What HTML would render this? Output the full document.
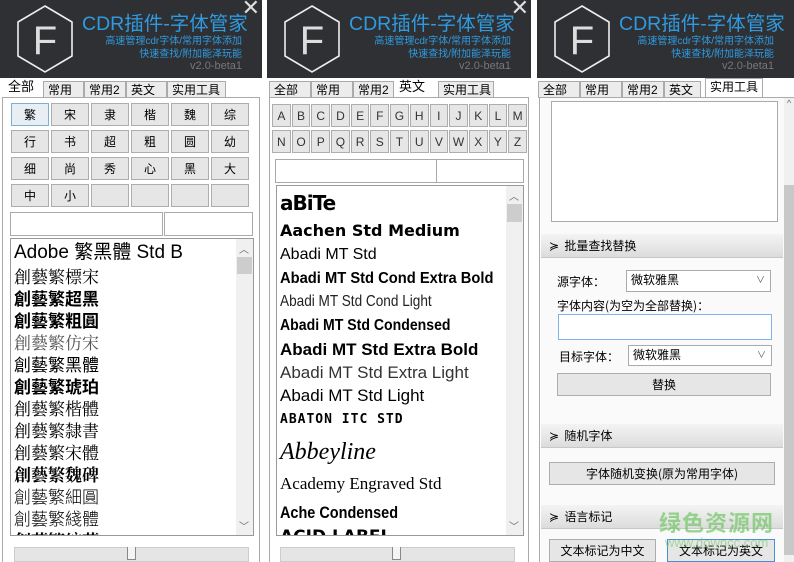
<!DOCTYPE html>
<html><head><meta charset="utf-8">
<style>
*{margin:0;padding:0;box-sizing:border-box}
body{width:794px;height:562px;background:#fff;position:relative;overflow:hidden;font-family:"Liberation Sans","Microsoft YaHei","Noto Sans CJK SC",sans-serif;font-size:12px;color:#000}
.p{position:absolute;top:0;height:562px;overflow:hidden;background:#fff}
.a{position:absolute}
.hdr{position:absolute;left:0;top:0;height:78px;background:#2f3033;width:100%}
.title{position:absolute;left:82px;top:7px;color:#2f9ae0;font-size:19.5px;font-family:"Liberation Sans","Noto Sans CJK SC",sans-serif;white-space:nowrap}
.sub{position:absolute;right:20px;color:#2f9ae0;font-size:10px;text-align:right;white-space:nowrap;line-height:13px}
.ver{position:absolute;right:20px;top:60px;color:#777;font-size:11px}
.x{position:absolute;right:2px;top:-4px;color:#ddd;font-size:22px;font-family:"DejaVu Sans",sans-serif}
.tab{position:absolute;top:81px;height:17px;border:1px solid #aaa;border-bottom:none;background:#ececec;font-size:12px;line-height:16px;padding-left:4px;font-family:"Liberation Sans","Noto Sans CJK SC",sans-serif}
.tab.on{background:#fff;border-color:#fff;top:78px;height:20px;font-size:13px}
.box{position:absolute;border:1px solid #aaa;background:#fff}
.btn{position:absolute;border:1px solid #adadad;background:#e6e6e6;text-align:center;font-family:"Noto Sans CJK SC",sans-serif;font-size:12px}
.lst{position:absolute;border:1px solid #999;background:#fff;overflow:hidden}
.it{position:absolute;left:3px;white-space:nowrap;font-family:"Noto Serif CJK SC","Noto Sans CJK SC",serif}
.sb{position:absolute;top:0;right:0;width:17px;bottom:0;background:#f0f0f0}
.sec{position:absolute;left:4px;width:242px;height:24px;background:linear-gradient(#f4f4f4,#dcdcdc);border-bottom:1px solid #c8c8c8;font-size:12px;line-height:24px;padding-left:8px;font-family:"Noto Sans CJK SC",sans-serif}
.sel{position:absolute;border:1px solid #aaa;background:#fff;font-size:12px;line-height:18px;padding-left:4px;font-family:"Noto Sans CJK SC",sans-serif}
.lb{position:absolute;font-size:12px;font-family:"Noto Sans CJK SC",sans-serif;white-space:nowrap}
.arr{position:absolute;right:5px;top:0;font-size:9px;color:#555}
</style></head><body>

<!-- PANEL 1 -->
<div class="p" style="left:0;width:262px">
 <div class="hdr">
  <svg class="a" style="left:15px;top:4px" width="60" height="70" viewBox="0 0 60 70"><polygon points="30,2 57,18 57,52 30,68 3,52 3,18" fill="none" stroke="#eee" stroke-width="1.6"/><text x="30" y="50" font-size="40" fill="#ddd" text-anchor="middle" font-family="Liberation Sans">F</text></svg>
  <div class="title">CDR插件-字体管家</div>
  <div class="sub" style="top:35px">高速管理cdr字体/常用字体添加<br>快速查找/附加能泽玩能</div>
  <div class="ver">v2.0-beta1</div>
  <div class="x">✕</div>
 </div>
 <div class="tab on" style="left:3px;width:40px">全部</div>
 <div class="tab" style="left:43px;width:41px">常用</div>
 <div class="tab" style="left:84px;width:42px">常用2</div>
 <div class="tab" style="left:126px;width:41px">英文</div>
 <div class="tab" style="left:167px;width:59px">实用工具</div>
 <div class="a" style="left:2px;top:97px;width:258px;height:470px;border:1px solid #aaa;border-bottom:none"></div>
 <div class="btn" style="left:11px;top:103px;width:38px;height:23px;line-height:21px;border-color:#7ab0d8;background:#e8eef4">繁</div>
 <div class="btn" style="left:51px;top:103px;width:38px;height:23px;line-height:21px">宋</div>
 <div class="btn" style="left:91px;top:103px;width:38px;height:23px;line-height:21px">隶</div>
 <div class="btn" style="left:131px;top:103px;width:38px;height:23px;line-height:21px">楷</div>
 <div class="btn" style="left:171px;top:103px;width:38px;height:23px;line-height:21px">魏</div>
 <div class="btn" style="left:211px;top:103px;width:38px;height:23px;line-height:21px">综</div>
 <div class="btn" style="left:11px;top:130px;width:38px;height:23px;line-height:21px">行</div>
 <div class="btn" style="left:51px;top:130px;width:38px;height:23px;line-height:21px">书</div>
 <div class="btn" style="left:91px;top:130px;width:38px;height:23px;line-height:21px">超</div>
 <div class="btn" style="left:131px;top:130px;width:38px;height:23px;line-height:21px">粗</div>
 <div class="btn" style="left:171px;top:130px;width:38px;height:23px;line-height:21px">圆</div>
 <div class="btn" style="left:211px;top:130px;width:38px;height:23px;line-height:21px">幼</div>
 <div class="btn" style="left:11px;top:157px;width:38px;height:23px;line-height:21px">细</div>
 <div class="btn" style="left:51px;top:157px;width:38px;height:23px;line-height:21px">尚</div>
 <div class="btn" style="left:91px;top:157px;width:38px;height:23px;line-height:21px">秀</div>
 <div class="btn" style="left:131px;top:157px;width:38px;height:23px;line-height:21px">心</div>
 <div class="btn" style="left:171px;top:157px;width:38px;height:23px;line-height:21px">黑</div>
 <div class="btn" style="left:211px;top:157px;width:38px;height:23px;line-height:21px">大</div>
 <div class="btn" style="left:11px;top:184px;width:38px;height:23px;line-height:21px">中</div>
 <div class="btn" style="left:51px;top:184px;width:38px;height:23px;line-height:21px">小</div>
 <div class="btn" style="left:91px;top:184px;width:38px;height:23px"></div>
 <div class="btn" style="left:131px;top:184px;width:38px;height:23px"></div>
 <div class="btn" style="left:171px;top:184px;width:38px;height:23px"></div>
 <div class="btn" style="left:211px;top:184px;width:38px;height:23px"></div>
 <div class="box" style="left:10px;top:212px;width:153px;height:24px"></div>
 <div class="box" style="left:164px;top:212px;width:89px;height:24px"></div>
 <div class="lst" style="left:10px;top:238px;width:244px;height:298px">
  <div class="sb"><div class="a" style="left:3px;top:2px;font-size:10px;color:#666">︿</div><div class="a" style="left:1px;top:18px;width:15px;height:17px;background:#cdcdcd"></div><div class="a" style="left:3px;bottom:2px;font-size:10px;color:#666">﹀</div></div>
  <div class="it" style="top:2px;font-size:19px;font-family:'Liberation Sans','Noto Sans CJK SC',sans-serif;line-height:24px">Adobe 繁黑體 Std B</div>
  <div class="it" style="top:26px;font-size:17px;line-height:22px">創藝繁標宋</div>
  <div class="it" style="top:48px;font-size:17px;line-height:22px;font-weight:bold;font-family:'Noto Sans CJK SC',sans-serif">創藝繁超黑</div>
  <div class="it" style="top:70px;font-size:17px;line-height:22px;font-weight:bold;font-family:'Noto Sans CJK SC',sans-serif">創藝繁粗圓</div>
  <div class="it" style="top:92px;font-size:17px;line-height:22px;color:#555">創藝繁仿宋</div>
  <div class="it" style="top:114px;font-size:17px;line-height:22px;font-family:'Noto Sans CJK SC',sans-serif">創藝繁黑體</div>
  <div class="it" style="top:136px;font-size:17px;line-height:22px;font-weight:bold;font-family:'Noto Sans CJK SC',sans-serif">創藝繁琥珀</div>
  <div class="it" style="top:158px;font-size:17px;line-height:22px">創藝繁楷體</div>
  <div class="it" style="top:180px;font-size:17px;line-height:22px">創藝繁隸書</div>
  <div class="it" style="top:202px;font-size:17px;line-height:22px">創藝繁宋體</div>
  <div class="it" style="top:224px;font-size:17px;line-height:22px;font-weight:bold">創藝繁魏碑</div>
  <div class="it" style="top:246px;font-size:17px;line-height:22px;font-family:'Noto Sans CJK SC',sans-serif;font-weight:300">創藝繁細圓</div>
  <div class="it" style="top:268px;font-size:17px;line-height:22px;font-family:'Noto Sans CJK SC',sans-serif;font-weight:300">創藝繁綫體</div>
  <div class="it" style="top:290px;font-size:17px;line-height:22px;font-weight:bold">創藝繁綜藝</div>
 </div>
 <div class="a" style="left:14px;top:547px;width:235px;height:15px;background:#e5e5e5;border:1px solid #ccc"></div>
 <div class="a" style="left:127px;top:547px;width:9px;height:13px;background:#f4f4f4;border:1px solid #888;border-top:none"></div>
</div>

<!-- PANEL 2 -->
<div class="p" style="left:267px;width:264px">
 <div class="hdr">
  <svg class="a" style="left:15px;top:4px" width="60" height="70" viewBox="0 0 60 70"><polygon points="30,2 57,18 57,52 30,68 3,52 3,18" fill="none" stroke="#eee" stroke-width="1.6"/><text x="30" y="50" font-size="40" fill="#ddd" text-anchor="middle" font-family="Liberation Sans">F</text></svg>
  <div class="title">CDR插件-字体管家</div>
  <div class="sub" style="top:35px">高速管理cdr字体/常用字体添加<br>快速查找/附加能泽玩能</div>
  <div class="ver">v2.0-beta1</div>
  <div class="x">✕</div>
 </div>
 <div class="tab" style="left:2px;width:42px">全部</div>
 <div class="tab" style="left:44px;width:42px">常用</div>
 <div class="tab" style="left:86px;width:41px">常用2</div>
 <div class="tab on" style="left:127px;width:38px">英文</div>
 <div class="tab" style="left:171px;width:56px">实用工具</div>
 <div class="a" style="left:2px;top:97px;width:260px;height:470px;border:1px solid #aaa;border-bottom:none"></div>
 <div class="a" style="left:5px;top:104px;width:255px;font-family:'Liberation Sans',sans-serif;font-size:13px;color:#333">
  <div style="display:flex;gap:1px">
   <div class="btn" style="position:static;width:19px;height:23px;line-height:22px;font-family:inherit">A</div><div class="btn" style="position:static;width:19px;height:23px;line-height:22px;font-family:inherit">B</div><div class="btn" style="position:static;width:19px;height:23px;line-height:22px;font-family:inherit">C</div><div class="btn" style="position:static;width:19px;height:23px;line-height:22px;font-family:inherit">D</div><div class="btn" style="position:static;width:19px;height:23px;line-height:22px;font-family:inherit">E</div><div class="btn" style="position:static;width:19px;height:23px;line-height:22px;font-family:inherit">F</div><div class="btn" style="position:static;width:19px;height:23px;line-height:22px;font-family:inherit">G</div><div class="btn" style="position:static;width:19px;height:23px;line-height:22px;font-family:inherit">H</div><div class="btn" style="position:static;width:19px;height:23px;line-height:22px;font-family:inherit">I</div><div class="btn" style="position:static;width:19px;height:23px;line-height:22px;font-family:inherit">J</div><div class="btn" style="position:static;width:19px;height:23px;line-height:22px;font-family:inherit">K</div><div class="btn" style="position:static;width:19px;height:23px;line-height:22px;font-family:inherit">L</div><div class="btn" style="position:static;width:19px;height:23px;line-height:22px;font-family:inherit">M</div>
  </div>
  <div style="display:flex;gap:1px;margin-top:3px">
   <div class="btn" style="position:static;width:19px;height:23px;line-height:22px;font-family:inherit">N</div><div class="btn" style="position:static;width:19px;height:23px;line-height:22px;font-family:inherit">O</div><div class="btn" style="position:static;width:19px;height:23px;line-height:22px;font-family:inherit">P</div><div class="btn" style="position:static;width:19px;height:23px;line-height:22px;font-family:inherit">Q</div><div class="btn" style="position:static;width:19px;height:23px;line-height:22px;font-family:inherit">R</div><div class="btn" style="position:static;width:19px;height:23px;line-height:22px;font-family:inherit">S</div><div class="btn" style="position:static;width:19px;height:23px;line-height:22px;font-family:inherit">T</div><div class="btn" style="position:static;width:19px;height:23px;line-height:22px;font-family:inherit">U</div><div class="btn" style="position:static;width:19px;height:23px;line-height:22px;font-family:inherit">V</div><div class="btn" style="position:static;width:19px;height:23px;line-height:22px;font-family:inherit">W</div><div class="btn" style="position:static;width:19px;height:23px;line-height:22px;font-family:inherit">X</div><div class="btn" style="position:static;width:19px;height:23px;line-height:22px;font-family:inherit">Y</div><div class="btn" style="position:static;width:19px;height:23px;line-height:22px;font-family:inherit">Z</div>
  </div>
 </div>
 <div class="box" style="left:8px;top:159px;width:249px;height:24px"><div class="a" style="left:160px;top:0;width:1px;height:22px;background:#aaa"></div></div>
 <div class="lst" style="left:9px;top:185px;width:248px;height:351px">
  <div class="sb"><div class="a" style="left:3px;top:2px;font-size:10px;color:#666">︿</div><div class="a" style="left:1px;top:18px;width:15px;height:18px;background:#cdcdcd"></div><div class="a" style="left:3px;bottom:2px;font-size:10px;color:#666">﹀</div></div>
  <div class="it" style="top:6px;font-size:20px;font-weight:bold;font-family:'DejaVu Sans',sans-serif;letter-spacing:-1px;line-height:22px">aBiTe</div>
  <div class="it" style="top:35px;font-size:16px;font-weight:bold;font-family:'DejaVu Sans',sans-serif;line-height:20px">Aachen Std Medium</div>
  <div class="it" style="top:59px;font-size:16px;font-family:'Liberation Sans',sans-serif;line-height:20px">Abadi MT Std</div>
  <div class="it" style="top:83px;font-size:16px;font-weight:bold;font-family:'Liberation Sans',sans-serif;line-height:20px;transform:scaleX(.92);transform-origin:left">Abadi MT Std Cond Extra Bold</div>
  <div class="it" style="top:106px;font-size:16px;font-family:'Liberation Sans Narrow','Liberation Sans',sans-serif;font-weight:300;line-height:20px;color:#222;transform:scaleX(.85);transform-origin:left">Abadi MT Std Cond Light</div>
  <div class="it" style="top:130px;font-size:16px;font-weight:bold;font-family:'Liberation Sans',sans-serif;line-height:20px;transform:scaleX(.88);transform-origin:left">Abadi MT Std Condensed</div>
  <div class="it" style="top:154px;font-size:17px;font-weight:bold;font-family:'Liberation Sans',sans-serif;line-height:20px">Abadi MT Std Extra Bold</div>
  <div class="it" style="top:177px;font-size:17px;font-family:'Liberation Sans',sans-serif;line-height:20px;color:#333">Abadi MT Std Extra Light</div>
  <div class="it" style="top:200px;font-size:17px;font-family:'Liberation Sans',sans-serif;line-height:20px">Abadi MT Std Light</div>
  <div class="it" style="top:226px;font-size:13px;font-weight:bold;font-family:'DejaVu Sans Mono',monospace;line-height:16px;letter-spacing:1px">ABATON ITC STD</div>
  <div class="it" style="top:252px;font-size:24px;font-style:italic;font-family:'Liberation Serif',serif;line-height:28px">Abbeyline</div>
  <div class="it" style="top:288px;font-size:17px;font-family:'Liberation Serif',serif;line-height:20px">Academy Engraved Std</div>
  <div class="it" style="top:317px;font-size:17px;font-weight:bold;font-family:'Liberation Sans Narrow','Liberation Sans',sans-serif;line-height:20px;transform:scaleX(.85);transform-origin:left">Ache Condensed</div>
  <div class="it" style="top:341px;font-size:17px;font-weight:bold;font-family:'DejaVu Sans',sans-serif;line-height:20px">ACID LABEL</div>
 </div>
 <div class="a" style="left:13px;top:547px;width:235px;height:15px;background:#e5e5e5;border:1px solid #ccc"></div>
 <div class="a" style="left:125px;top:547px;width:9px;height:13px;background:#f4f4f4;border:1px solid #888;border-top:none"></div>
</div>

<!-- PANEL 3 -->
<div class="p" style="left:537px;width:257px">
 <div class="hdr">
  <svg class="a" style="left:15px;top:4px" width="60" height="70" viewBox="0 0 60 70"><polygon points="30,2 57,18 57,52 30,68 3,52 3,18" fill="none" stroke="#eee" stroke-width="1.6"/><text x="30" y="50" font-size="40" fill="#ddd" text-anchor="middle" font-family="Liberation Sans">F</text></svg>
  <div class="title">CDR插件-字体管家</div>
  <div class="sub" style="top:35px">高速管理cdr字体/常用字体添加<br>快速查找/附加能泽玩能</div>
  <div class="ver">v2.0-beta1</div>
 </div>
 <div class="tab" style="left:1px;width:42px">全部</div>
 <div class="tab" style="left:43px;width:42px">常用</div>
 <div class="tab" style="left:85px;width:42px">常用2</div>
 <div class="tab" style="left:127px;width:37px">英文</div>
 <div class="tab on" style="left:168px;width:58px;border:1px solid #aaa;border-bottom:none;top:78px;font-size:12px">实用工具</div>
 <div class="a" style="left:2px;top:97px;width:260px;height:470px;border:1px solid #aaa;border-bottom:none"></div>
 <div class="a" style="left:4px;top:98px;width:243px;height:464px;background:#fafafa"></div>
 <div class="a" style="left:247px;top:98px;width:12px;height:464px;background:#f0f0f0"></div>
 <div class="a" style="left:247px;top:185px;width:12px;height:370px;background:#c8c8c8"></div>
 <div class="a" style="left:250px;top:98px;font-size:9px;color:#666">^</div>
 <div class="box" style="left:14px;top:101px;width:227px;height:121px"></div>
 <div class="sec" style="top:234px">≽&nbsp; 批量查找替换</div>
 <div class="lb" style="left:20px;top:273px">源字体：</div>
 <div class="sel" style="left:89px;top:270px;width:145px;height:22px">微软雅黑<span class="arr">∨</span></div>
 <div class="lb" style="left:20px;top:297px">字体内容(为空为全部替换)：</div>
 <div class="box" style="left:21px;top:314px;width:214px;height:26px;border-color:#7eb4ea"></div>
 <div class="lb" style="left:22px;top:348px">目标字体：</div>
 <div class="sel" style="left:91px;top:345px;width:144px;height:21px">微软雅黑<span class="arr">∨</span></div>
 <div class="btn" style="left:20px;top:373px;width:214px;height:23px;line-height:21px">替换</div>
 <div class="sec" style="top:424px">≽&nbsp; 随机字体</div>
 <div class="btn" style="left:12px;top:462px;width:226px;height:23px;line-height:21px">字体随机变换(原为常用字体)</div>
 <div class="sec" style="top:505px">≽&nbsp; 语言标记</div>
 <div class="btn" style="left:12px;top:539px;width:107px;height:23px;line-height:21px">文本标记为中文</div>
 <div class="btn" style="left:130px;top:539px;width:108px;height:23px;line-height:21px;border-color:#4a90d0">文本标记为英文</div>
 <div class="a" style="left:122px;top:506px;font-size:22px;font-weight:bold;color:rgba(120,200,110,.75);font-family:'Noto Sans CJK SC',sans-serif;letter-spacing:1px">绿色资源网</div>
 <div class="a" style="left:128px;top:535px;font-size:13px;color:rgba(120,200,110,.6)">www.downcc.com</div>
</div>
</body></html>
